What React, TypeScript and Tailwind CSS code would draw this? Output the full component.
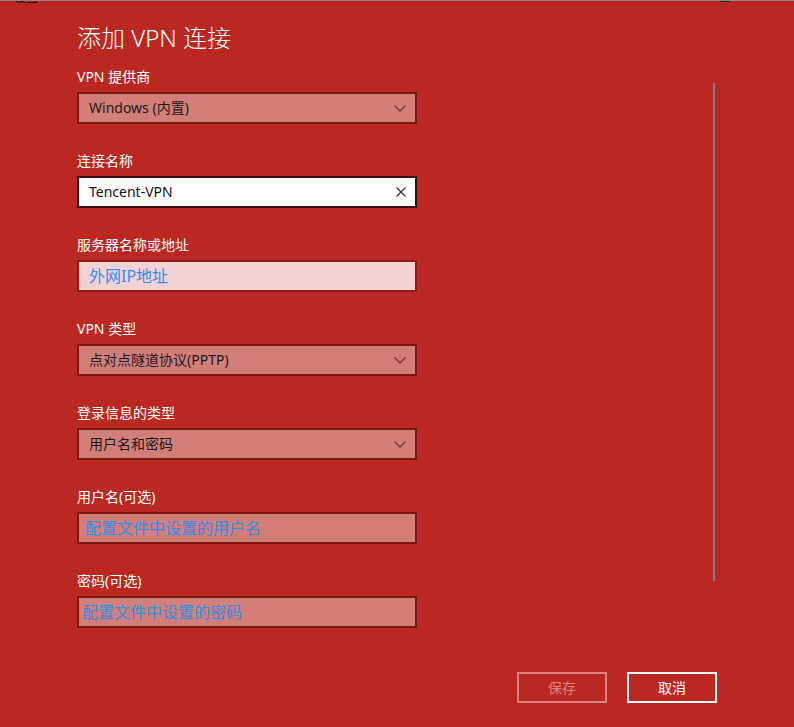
import React from "react";

const FONT = '"Noto Sans", "Noto Sans CJK SC", sans-serif';

function Chevron() {
  return (
    <svg width="12" height="7" viewBox="0 0 12 7" className="shrink-0">
      <polyline points="0.5,0.5 6,6 11.5,0.5" fill="none" stroke="#6b3431" strokeWidth="1.2" />
    </svg>
  );
}

function ClearX() {
  return (
    <svg width="10" height="10" viewBox="0 0 10 10" className="shrink-0">
      <line x1="0.5" y1="0.5" x2="9.5" y2="9.5" stroke="#333" strokeWidth="1.2" />
      <line x1="9.5" y1="0.5" x2="0.5" y2="9.5" stroke="#333" strokeWidth="1.2" />
    </svg>
  );
}

function Label({ children }: { children: React.ReactNode }) {
  return <div className="h-[20px] leading-[20px] text-[14px] text-white">{children}</div>;
}

function Dropdown({ value }: { value: string }) {
  return (
    <div className="mt-[5px] h-[32px] w-[340px] border-2 border-[#7c1813] bg-[#d47e79] flex items-center pl-[10px] pr-[9px]">
      <span className="flex-1 text-[14px] text-[#1a1a1a] leading-none">{value}</span>
      <Chevron />
    </div>
  );
}

export default function App() {
  return (
    <div className="w-[794px] h-[727px] bg-[#bb2822] relative overflow-hidden" style={{ fontFamily: FONT }}>
      {/* remnant of the window title bar */}
      <div className="h-[4px] overflow-hidden border-t border-[#8a8a8a] relative">
        <div className="absolute left-[14px] -top-[10px] text-[12px] text-black leading-[14px]">设置</div>
        <div className="absolute left-[720px] -top-[1px] w-[10px] h-[2px] border border-[#222]" />
        <div className="absolute left-[766px] -top-[9px] text-[12px] text-black leading-[12px]">✕</div>
      </div>

      <div className="pl-[77px]">
        <div className="mt-[18px] h-[32px] leading-[32px] text-[24px] text-white font-light">添加 VPN 连接</div>

        <div className="mt-[13px]">
          <Label>VPN 提供商</Label>
          <Dropdown value="Windows (内置)" />
        </div>

        <div className="mt-[27px]">
          <Label>连接名称</Label>
          <div className="mt-[5px] h-[32px] w-[340px] border-2 border-[#3a0d0a] bg-white flex items-center pl-[10px] pr-[9px]">
            <span className="flex-1 text-[14px] text-[#111] leading-none">Tencent-VPN</span>
            <ClearX />
          </div>
        </div>

        <div className="mt-[27px]">
          <Label>服务器名称或地址</Label>
          <div className="mt-[5px] h-[32px] w-[340px] border-2 border-[#8c1a15] bg-[#f2d3d3] flex items-center pl-[10px]">
            <span className="text-[16px] text-[#2f8ff0] leading-none">外网IP地址</span>
          </div>
        </div>

        <div className="mt-[27px]">
          <Label>VPN 类型</Label>
          <Dropdown value="点对点隧道协议(PPTP)" />
        </div>

        <div className="mt-[27px]">
          <Label>登录信息的类型</Label>
          <Dropdown value="用户名和密码" />
        </div>

        <div className="mt-[27px]">
          <Label>用户名(可选)</Label>
          <div className="mt-[5px] h-[32px] w-[340px] border-2 border-[#7c1813] bg-[#d47e79] flex items-center pl-[6px]">
            <span className="text-[16px] text-[#2f8ff0] leading-none">配置文件中设置的用户名</span>
          </div>
        </div>

        <div className="mt-[27px]">
          <Label>密码(可选)</Label>
          <div className="mt-[5px] h-[32px] w-[340px] border-2 border-[#7c1813] bg-[#d47e79] flex items-center pl-[3px]">
            <span className="text-[16px] text-[#2f8ff0] leading-none">配置文件中设置的密码</span>
          </div>
        </div>
      </div>

      <div className="mt-[44px] pr-[77px] flex justify-end gap-[20px]">
        <div className="w-[90px] h-[31px] border-2 border-[#d9837d] flex items-center justify-center text-[14px] text-[#d9837d]">保存</div>
        <div className="w-[90px] h-[31px] border-2 border-white flex items-center justify-center text-[14px] text-white">取消</div>
      </div>

      {/* scrollbar */}
      <div className="absolute left-[713px] top-[83px] w-[2px] h-[498px] bg-[#808080]" />
    </div>
  );
}
